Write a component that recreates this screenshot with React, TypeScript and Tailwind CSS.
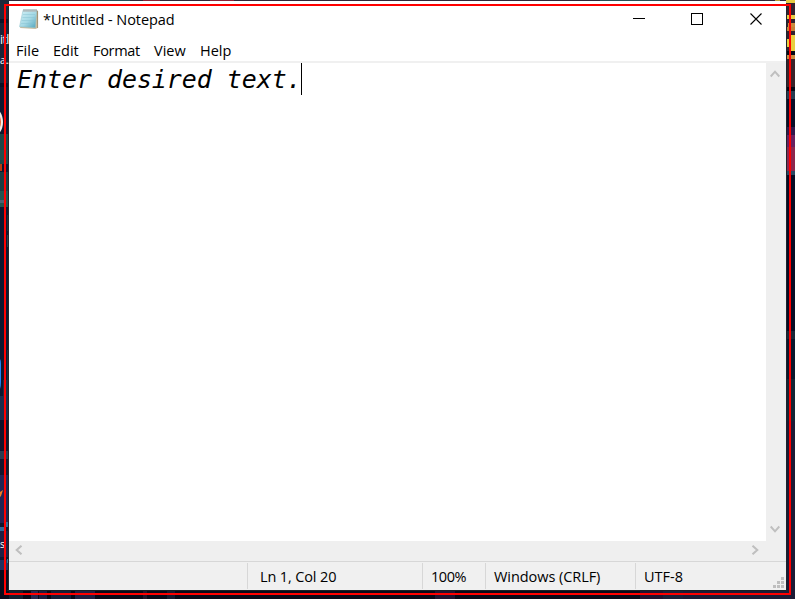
import React from "react";

type Block = [number, number, number, number, string];

// Pixel blocks of the wallpaper visible around the window
const blocks: Block[] = [
  [0, 0, 9, 20, "#1d2a3c"], [0, 19, 9, 4, "#0c1428"], [0, 23, 9, 60, "#1b2438"],
  [0, 83, 9, 4, "#0a1024"], [0, 87, 9, 60, "#10182f"], [0, 134, 9, 30, "#1d4646"],
  [0, 150, 9, 10, "#254f4c"], [0, 172, 9, 28, "#1c3d42"], [0, 191, 9, 16, "#24544f"],
  [0, 200, 4, 3, "#4b6272"], [0, 207, 9, 190, "#0c1730"], [7, 215, 2, 16, "#1a2c3c"],
  [7, 235, 2, 12, "#2a3c4a"], [7, 350, 2, 30, "#1c2b3c"], [3, 380, 6, 16, "#1a3042"],
  [0, 396, 9, 34, "#1b2d4c"], [0, 420, 9, 10, "#10102a"], [0, 430, 9, 20, "#15132c"],
  [0, 451, 9, 8, "#2c3c50"], [0, 459, 9, 16, "#15152e"], [0, 475, 9, 48, "#232453"],
  [0, 527, 4, 4, "#2f6d9a"], [6, 522, 2, 5, "#2f6d9a"], [0, 531, 9, 26, "#202044"],
  [0, 560, 9, 10, "#1f3160"], [7, 559, 2, 4, "#34759a"], [0, 570, 9, 29, "#080b1c"],
  [9, 0, 777, 1, "#302737"], [90, 0, 40, 1, "#27505a"], [143, 0, 17, 1, "#8c2436"],
  [210, 0, 24, 1, "#8c2436"], [600, 0, 60, 1, "#295055"], [775, 0, 5, 1, "#b9a13c"],
  [786, 0, 9, 51, "#33212f"], [786, 0, 9, 3, "#e6cc43"], [786, 15, 9, 4, "#e6cc43"],
  [788, 23, 7, 4, "#ca8b3d"], [786, 27, 9, 4, "#c68138"], [789, 35, 6, 16, "#e7cf40"],
  [786, 39, 3, 8, "#e7cf40"], [786, 51, 9, 4, "#050816"], [786, 55, 9, 4, "#ca8b3d"],
  [786, 59, 9, 28, "#3b232a"], [786, 87, 9, 4, "#050816"], [786, 91, 9, 8, "#293b50"],
  [786, 99, 9, 28, "#0a0e28"], [786, 127, 9, 8, "#32184b"], [786, 135, 9, 12, "#69215f"],
  [786, 147, 9, 24, "#8d274e"], [786, 171, 9, 4, "#2c4963"], [786, 175, 9, 156, "#090d25"],
  [786, 331, 9, 8, "#1c2737"], [786, 339, 9, 40, "#0b182d"], [786, 379, 9, 42, "#152535"],
  [786, 421, 9, 178, "#1d1b36"],
  [9, 590, 777, 9, "#080818"], [9, 591, 14, 8, "#141f30"], [31, 591, 7, 8, "#27264f"],
  [39, 591, 8, 8, "#1d1d40"], [51, 591, 20, 8, "#151d37"], [75, 591, 20, 8, "#211e41"],
  [143, 591, 4, 8, "#23152a"], [167, 591, 8, 8, "#18182e"], [435, 591, 20, 8, "#211330"],
  [640, 591, 23, 8, "#211330"], [663, 591, 20, 8, "#1b2039"], [683, 591, 103, 8, "#1d1b36"],
  [7, 590, 780, 1, "#182026"], [786, 3, 1, 588, "#1d242c"], [8, 3, 1, 588, "#1b252c"],
];

const Wallpaper = () => (
  <svg className="absolute inset-0" width="795" height="599" shapeRendering="crispEdges">
    {blocks.map(([x, y, w, h, c], i) => (
      <rect key={i} x={x} y={y} width={w} height={h} fill={c} />
    ))}
    <g shapeRendering="auto">
      <ellipse cx="-8" cy="122" rx="11" ry="15" fill="#f4eee8" />
      <ellipse cx="-9" cy="122" rx="10" ry="12" fill="#e2683c" />
      <path d="M0 164h2v7H0z" fill="#b53c12" />
      <path d="M0 359q1 1 1 5v18q0 5-1 7z" fill="#2582f5" />
      <path d="M0 492l3-2-2 6-1 1z" fill="#f27b25" />
    </g>
  </svg>
);

const NotepadIcon = () => (
  <svg width="20" height="22" viewBox="0 0 20 22" className="shrink-0">
    <defs>
      <linearGradient id="paper" x1="0" y1="0" x2="1" y2="1">
        <stop offset="0" stopColor="#d3f1f7" />
        <stop offset=".55" stopColor="#a4d8e4" />
        <stop offset="1" stopColor="#4fa3bb" />
      </linearGradient>
    </defs>
    <path d="M17 2.5h2l-.2 17.5-2.3 1L1 20l.3-1.2z" fill="#c9bc9f" />
    <path d="M18.6 3v17" stroke="#8b7a5a" strokeWidth=".7" />
    <path d="M4 2.3h13.7l-1.4 17.4L.5 18.7z" fill="url(#paper)" stroke="#8fc0cb" strokeWidth=".5" />
    <path d="M4 6.5h12M3.4 9.5h12.4M2.8 12.5h12.7M2.2 15.5h13" stroke="#84c0cf" strokeWidth=".45" />
    <path d="M4 2.8h13.5" stroke="#d5e3e5" strokeWidth="1.8" />
    <path d="M5 1v2.7M7 1v2.7M9 1v2.7M11 1v2.7M13 1v2.7M15 1v2.7M17 1v2.7" stroke="#747d80" strokeWidth=".8" />
  </svg>
);

const Arrow = ({ points, w, h }: { points: string; w: number; h: number }) => (
  <svg width={w} height={h} className="block shrink-0">
    <polyline points={points} fill="none" stroke="#bfbfbf" strokeWidth="2" />
  </svg>
);

const TitleBar = () => (
  <div className="flex h-[38px] pl-[10px]">
    <div className="pt-[7px]"><NotepadIcon /></div>
    <div className="ml-[4px] mt-[9px] h-5 whitespace-nowrap text-[14.5px] leading-5 tracking-[-0.08px]">*Untitled - Notepad</div>
    <svg width="130" height="14" className="ml-auto mr-[23px] mt-[11px]" fill="none" stroke="#000" shapeRendering="crispEdges">
      <path d="M0 6.5h12M58.5 1.5h11v11h-11z" />
      <path d="M117.5 1.5l11 11M128.5 1.5l-11 11" shapeRendering="auto" strokeWidth="1.1" />
    </svg>
  </div>
);

const MenuBar = () => (
  <div className="flex h-[24px] border-b-2 border-[#f0f0f0] pl-[7px] text-[14.5px] leading-[24px]">
    <span className="w-[37px] tracking-[0.1px]">File</span>
    <span className="w-[40px]">Edit</span>
    <span className="w-[61px] tracking-[-0.3px]">Format</span>
    <span className="w-[46px]">View</span>
    <span>Help</span>
  </div>
);

const StatusBar = () => (
  <div className="relative flex h-[29px] border-t border-[#d7d7d7] bg-[#f0f0f0] py-px text-[14.5px] leading-[28px] whitespace-nowrap">
    <div className="w-[239px] border-r border-[#d7d7d7]" />
    <div className="w-[175px] border-r border-[#d7d7d7] pl-[12px] tracking-[-0.13px]">Ln 1, Col 20</div>
    <div className="w-[63px] border-r border-[#d7d7d7] pl-[8px] tracking-[-0.45px]">100%</div>
    <div className="w-[150px] border-r border-[#d7d7d7] pl-[8px] tracking-[-0.06px]">Windows (CRLF)</div>
    <div className="pl-[8px]">UTF-8</div>
    <svg width="11" height="11" className="absolute bottom-[2px] right-[2px]" fill="#bfbfbf">
      <path d="M8 0h3v3H8zM4 4h3v3H4zM8 4h3v3H8zM0 8h3v3H0zM4 8h3v3H4zM8 8h3v3H8z" />
    </svg>
  </div>
);

export default function App() {
  return (
    <div className="relative h-[599px] w-[795px] overflow-hidden bg-[#0c1730] font-['Open_Sans','Noto_Sans',sans-serif] text-black">
      <Wallpaper />
      <div className="absolute left-0 top-[31px] text-[12px] leading-[18px] tracking-[-0.5px] text-white">itl</div>
      <div className="absolute left-0 top-[51px] text-[10px] leading-[18px] tracking-[-1px] text-white">a..</div>
      <div className="absolute left-0 top-[535px] text-[10px] leading-[18px] text-white">s</div>
      <main className="absolute left-[9px] top-[1px] flex h-[589px] w-[777px] flex-col bg-white">
        <TitleBar />
        <MenuBar />
        <div className="flex min-h-0 flex-1 bg-[#efefef]">
          <div className="flex flex-1 flex-col">
            <div className="flex flex-1 bg-white pl-[8px]">
              <span className="w-[284px] whitespace-pre font-['DejaVu_Sans_Mono',monospace] text-[24.9px] italic leading-[33px]">Enter desired text.</span>
              <span className="h-8 w-px bg-black" />
            </div>
            <div className="flex h-5 items-start justify-between pl-[6px] pr-[7px] pt-[4px]">
              <Arrow w={8} h={10} points="6.5,0.7 1.7,5 6.5,9.3" />
              <Arrow w={8} h={10} points="1.5,0.7 6.3,5 1.5,9.3" />
            </div>
          </div>
          <div className="flex w-5 flex-col items-start justify-between pb-[28px] pl-[4px] pt-[7px]">
            <Arrow w={10} h={8} points="0.7,6.5 5,1.7 9.3,6.5" />
            <Arrow w={10} h={8} points="0.7,1.5 5,6.3 9.3,1.5" />
          </div>
        </div>
        <StatusBar />
      </main>
      <div className="pointer-events-none absolute left-[4px] top-[4px] h-[591px] w-[787px] border-2 border-[#ff0000]" />
    </div>
  );
}
